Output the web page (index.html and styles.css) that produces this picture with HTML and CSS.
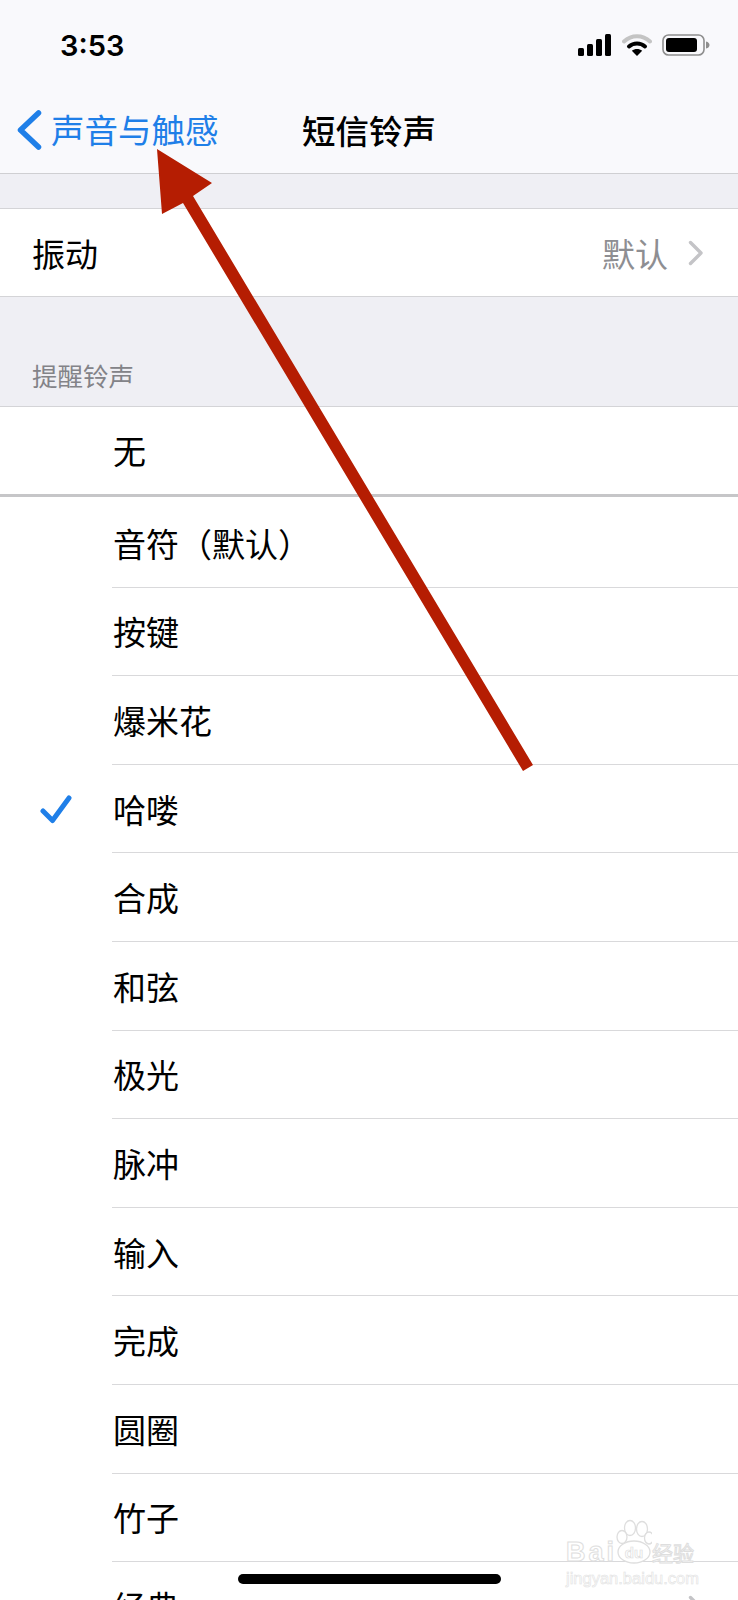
FILE: index.html
```html
<!DOCTYPE html>
<html lang="zh-CN">
<head>
  <meta charset="UTF-8">
  <meta name="viewport" content="width=device-width, initial-scale=1.0">
  <title>短信铃声</title>
  <link rel="stylesheet" href="styles.css">
</head>
<body>
<div class="phone">
  <header class="topbar">
    <div class="status">
      <span class="time">3:53</span>
      <div class="status-icons">
        <svg class="signal" width="34" height="22" viewBox="0 0 34 22">
          <rect x="0" y="14" width="6" height="8" rx="1.5"/>
          <rect x="9" y="10" width="6" height="12" rx="1.5"/>
          <rect x="18" y="5" width="6" height="17" rx="1.5"/>
          <rect x="27" y="0" width="6" height="22" rx="1.5"/>
        </svg>
        <svg class="wifi" width="30" height="22" viewBox="0 0 30 22">
          <path d="M2 7.5C9.5 .5 20.5 .5 28 7.5" fill="none" stroke="#c4c4c4" stroke-width="4" stroke-linecap="round"/>
          <path d="M7 12.5C11.5 8.5 18.5 8.5 23 12.5" fill="none" stroke="#000" stroke-width="4" stroke-linecap="round"/>
          <path d="M15 22L9.8 16.8C12.8 14.4 17.2 14.4 20.2 16.8Z"/>
        </svg>
        <svg class="battery" width="48" height="22" viewBox="0 0 48 22">
          <rect x="1" y="1" width="41" height="20" rx="5.5" fill="none" stroke="#8e8e8e" stroke-width="1.6"/>
          <rect x="4" y="4" width="31" height="14" rx="3"/>
          <path d="M44 7.5C46.500 8 47.500 9.500 47.500 11C47.500 12.500 46.500 14 44 14.500Z" fill="#8e8e8e"/>
        </svg>
      </div>
    </div>
    <nav class="nav">
      <a class="back" href="#">
        <svg width="26" height="42" viewBox="0 0 26 42">
          <path d="M21.500 4L3.500 21L21.500 38" fill="none" stroke="#1f7fe8" stroke-width="5.500" stroke-linecap="round" stroke-linejoin="round"/>
        </svg>
        <span>声音与触感</span>
      </a>
      <h1 class="title">短信铃声</h1>
    </nav>
  </header>

  <section class="group vibrate">
    <div class="row row-top">
      <span>振动</span>
      <span class="row-end">
        <span class="value">默认</span>
        <svg class="chevron" width="16" height="26" viewBox="0 0 16 26"><path d="M2.500 2.500L13 13L2.500 23.500" fill="none" stroke="#c4c4c7" stroke-width="3.400" stroke-linecap="round" stroke-linejoin="round"/></svg>
      </span>
    </div>
  </section>

  <div class="group-label">提醒铃声</div>

  <section class="group">
    <div class="row row-none"><span class="tick"></span><span class="tone-text">无</span></div>
  </section>

  <ul class="tones">
    <li class="tone"><span class="tick"></span><span class="tone-name">音符（默认）</span></li>
    <li class="tone"><span class="tick"></span><span class="tone-name">按键</span></li>
    <li class="tone"><span class="tick"></span><span class="tone-name">爆米花</span></li>
    <li class="tone">
      <span class="tick">
        <svg width="32" height="29" viewBox="0 0 32 29"><path d="M3 16L12.500 25.500L29 3" fill="none" stroke="#1f7fe8" stroke-width="5" stroke-linecap="round" stroke-linejoin="round"/></svg>
      </span>
      <span class="tone-name">哈喽</span>
    </li>
    <li class="tone"><span class="tick"></span><span class="tone-name">合成</span></li>
    <li class="tone"><span class="tick"></span><span class="tone-name">和弦</span></li>
    <li class="tone"><span class="tick"></span><span class="tone-name">极光</span></li>
    <li class="tone"><span class="tick"></span><span class="tone-name">脉冲</span></li>
    <li class="tone"><span class="tick"></span><span class="tone-name">输入</span></li>
    <li class="tone"><span class="tick"></span><span class="tone-name">完成</span></li>
    <li class="tone"><span class="tick"></span><span class="tone-name">圆圈</span></li>
    <li class="tone"><span class="tick"></span><span class="tone-name">竹子</span></li>
    <li class="tone">
      <span class="tick"></span>
      <span class="tone-name">经典</span>
      <svg class="chevron chevron-last" width="16" height="26" viewBox="0 0 16 26"><path d="M2.500 2.500L13 13L2.500 23.500" fill="none" stroke="#c4c4c7" stroke-width="3.400" stroke-linecap="round" stroke-linejoin="round"/></svg>
    </li>
  </ul>

  <!-- annotation drawn over the screenshot -->
  <svg class="arrow" width="738" height="1600" viewBox="0 0 738 1600">
    <polygon points="157,149 212,183 193,196 533,765 523,771 183,203 162,214" fill="#b51d02"/>
  </svg>

  <div class="home-bar"></div>

  <div class="watermark">
    <div class="wm-logo">
      <span class="wm-bai">Bai</span>
      <svg class="wm-paw" width="36" height="46" viewBox="0 0 36 46">
        <g fill="#fff" stroke="#dedede" stroke-width="1.300">
          <ellipse cx="14" cy="9" rx="5.500" ry="7.500"/>
          <ellipse cx="26" cy="10" rx="5.500" ry="7.500"/>
          <ellipse cx="6" cy="18" rx="5" ry="6.500"/>
          <ellipse cx="33" cy="19" rx="4.500" ry="6"/>
          <ellipse cx="18" cy="33" rx="16" ry="11"/>
        </g>
        <text class="wm-du" x="18" y="39" text-anchor="middle">du</text>
      </svg>
      <span class="wm-jy">经验</span>
    </div>
    <div class="wm-url">jingyan.baidu.com</div>
  </div>
</div>
</body>
</html>
```

FILE: styles.css
```css
* {
  margin: 0;
  padding: 0;
  box-sizing: border-box;
}

body {
  font-family: "Noto Sans CJK SC", "Noto Sans", sans-serif;
  background: #fff;
  color: #000;
}

.phone {
  position: relative;
  width: 738px;
  height: 1600px;
  overflow: hidden;
  background: #fff;
}

/* top bar */
.topbar {
  height: 174px;
  background: #f9f9fc;
  border-bottom: 1px solid #cfcfd2;
}

.status {
  height: 90px;
  display: flex;
  align-items: center;
  justify-content: space-between;
  padding: 0 28px 0 60px;
}

.time {
  font-family: Inter, "Liberation Sans", sans-serif;
  font-size: 29px;
  font-weight: 600;
  line-height: 1;
}

.status-icons {
  display: flex;
  align-items: center;
  gap: 10px;
}

.nav {
  height: 83px;
  display: grid;
  grid-template-columns: 1fr auto 1fr;
  align-items: center;
  padding-bottom: 3px;
}

.back {
  display: flex;
  align-items: center;
  gap: 8px;
  margin-left: 17px;
  color: #1f7fe8;
  font-size: 33.500px;
  line-height: 1.2;
  text-decoration: none;
  white-space: nowrap;
}

.back span {
  position: relative;
  top: -1px;
}

.back svg {
  flex: none;
}

.title {
  font-size: 33.500px;
  font-weight: 500;
  line-height: 1.2;
}

/* groups */
.group {
  background: #fff;
}

.vibrate {
  border-top: 34px solid #efeff4;
}

.row {
  display: flex;
  align-items: center;
  justify-content: space-between;
  font-size: 33px;
}

.row-top {
  height: 89px;
  padding: 0 0 0 32px;
  border-top: 1px solid #d4d4d7;
  border-bottom: 1px solid #d4d4d7;
}

.row-end {
  display: flex;
  align-items: center;
  gap: 20px;
  padding-right: 34px;
}

.value {
  color: #8e8e92;
}

.group-label {
  height: 110px;
  padding: 60px 0 0 32px;
  background: #efeff4;
  border-bottom: 1px solid #d4d4d7;
  color: #838388;
  font-size: 25.500px;
  line-height: 36px;
}

.row-none {
  height: 90px;
  justify-content: flex-start;
  padding-bottom: 1px;
  border-bottom: 3px solid #c6c6c8;
}

.tick {
  flex: none;
  display: flex;
  align-items: center;
  width: 112px;
  padding-left: 40px;
}

/* ringtone list */
.tones {
  list-style: none;
  padding-top: 2px;
}

.tone {
  position: relative;
  display: flex;
  align-items: center;
  height: 88.600px;
  font-size: 33px;
}

.tone-text {
  padding-left: 1px;
}

.tone-name {
  flex: 1;
  align-self: stretch;
  display: flex;
  align-items: center;
  padding-left: 1px;
  border-bottom: 1px solid #d9d9db;
}

.chevron {
  flex: none;
}

.chevron-last {
  position: absolute;
  right: 34px;
  top: 33px;
}

/* overlays */
.arrow {
  position: absolute;
  left: 0;
  top: 0;
  pointer-events: none;
}

.home-bar {
  position: absolute;
  left: 238px;
  top: 1574px;
  width: 263px;
  height: 10px;
  border-radius: 5px;
  background: #000;
}

.watermark {
  position: absolute;
  left: 566px;
  top: 1519px;
  width: 132px;
  font-family: "Liberation Sans", "Noto Sans CJK SC", sans-serif;
  color: #fff;
  -webkit-text-stroke: 1px #dedede;
}

.wm-logo {
  display: flex;
  align-items: flex-end;
  height: 46px;
}

.wm-bai {
  flex: none;
  width: 50px;
  font-size: 27px;
  font-weight: 700;
  letter-spacing: 3px;
  line-height: 26px;
}

.wm-paw {
  flex: none;
}

.wm-du {
  font-family: "Liberation Sans", sans-serif;
  font-size: 15px;
  font-weight: 700;
  fill: #fff;
  stroke: #dedede;
  stroke-width: 0.7px;
}

.wm-jy {
  font-family: "Noto Sans CJK SC", sans-serif;
  font-size: 21px;
  line-height: 26px;
  white-space: nowrap;
}

.wm-url {
  margin-top: 3px;
  font-size: 16.500px;
  line-height: 20px;
  white-space: nowrap;
  -webkit-text-stroke: 0.6px #e2e2e2;
}
```
